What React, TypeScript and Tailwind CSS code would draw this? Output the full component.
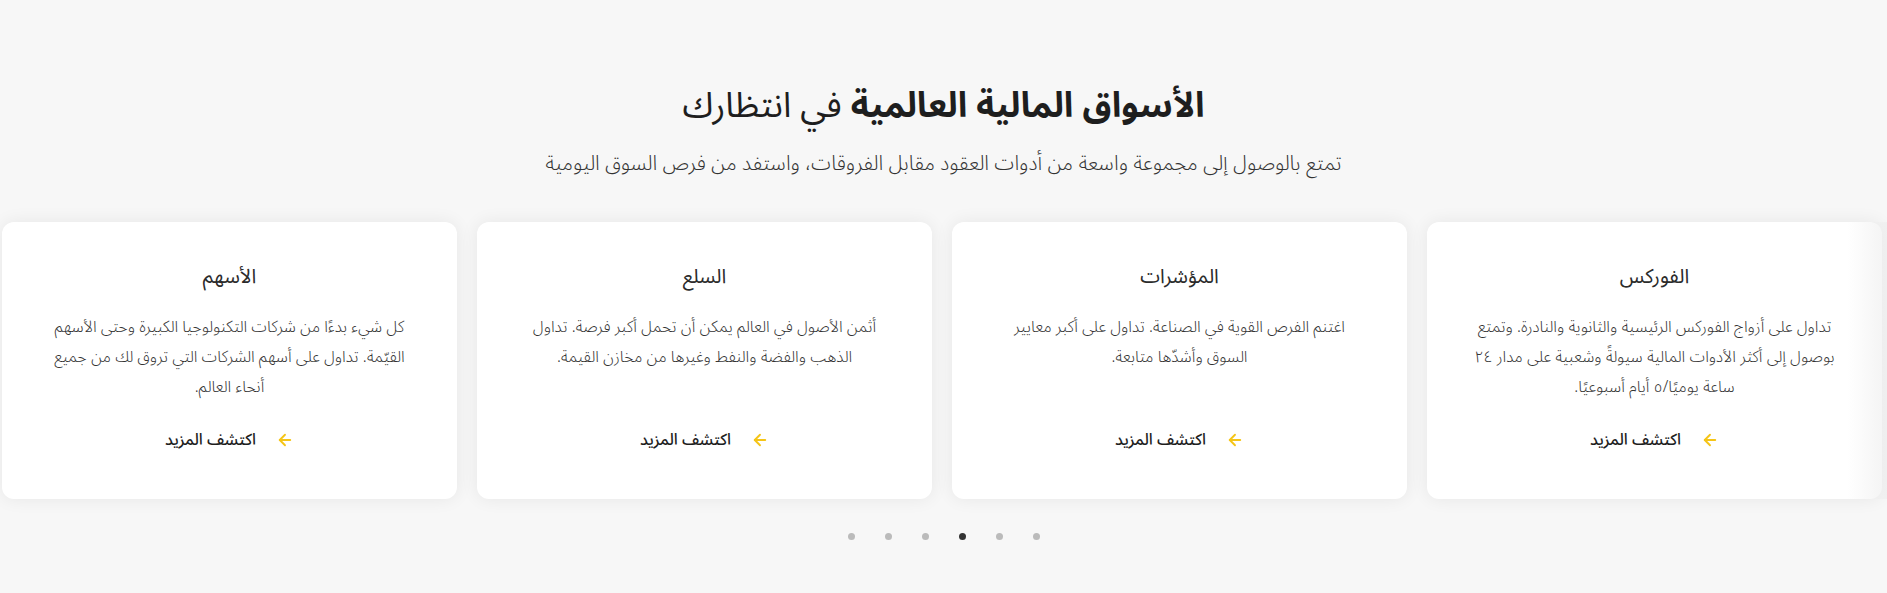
import React from "react";

const cards = [
  {
    title: "الفوركس",
    body: "تداول على أزواج الفوركس الرئيسية والثانوية والنادرة. وتمتع بوصول إلى أكثر الأدوات المالية سيولةً وشعبية على مدار ٢٤ ساعة يوميًا/٥ أيام أسبوعيًا.",
  },
  {
    title: "المؤشرات",
    body: "اغتنم الفرص القوية في الصناعة. تداول على أكبر معايير السوق وأشدّها متابعة.",
  },
  {
    title: "السلع",
    body: "أثمن الأصول في العالم يمكن أن تحمل أكبر فرصة. تداول الذهب والفضة والنفط وغيرها من مخازن القيمة.",
  },
  {
    title: "الأسهم",
    body: "كل شيء بدءًا من شركات التكنولوجيا الكبيرة وحتى الأسهم القيّمة. تداول على أسهم الشركات التي تروق لك من جميع أنحاء العالم.",
  },
];

function Arrow() {
  return (
    <svg width="18" height="18" viewBox="0 0 24 24" fill="none" stroke="#f5c518" strokeWidth="2.5" strokeLinecap="round" strokeLinejoin="round">
      <path d="M19 12H5" />
      <path d="M12 19l-7-7 7-7" />
    </svg>
  );
}

export default function App() {
  return (
    <div
      dir="rtl"
      className="relative min-h-[593px] w-full overflow-hidden bg-[#f7f7f7] pt-[81px]"
      style={{ fontFamily: '"Noto Sans Arabic", "Noto Naskh Arabic", "DejaVu Sans", sans-serif' }}
    >
      <h2 className="text-center text-[35px] leading-[50px] text-[#1e1e1e]">
        <span className="font-bold">الأسواق المالية العالمية</span> في انتظارك
      </h2>
      <p className="mt-[18px] text-center text-[20.5px] font-light leading-[30px] text-[#333]">
        تمتع بالوصول إلى مجموعة واسعة من أدوات العقود مقابل الفروقات، واستفد من فرص السوق اليومية
      </p>

      <div className="relative mt-[43px] flex gap-5 pl-[2px] pr-[5px]">
        {cards.map((c) => (
          <div
            key={c.title}
            className="flex h-[277px] w-[455px] shrink-0 flex-col items-center rounded-xl bg-white px-10 pb-[47px] pt-10 text-center shadow-[0_0_18px_rgba(0,0,0,0.07)]"
          >
            <h3 className="mb-5 text-[20px] leading-[30px] text-[#2b2b2b]">{c.title}</h3>
            <p className="text-[16px] font-light leading-[30px] text-[#333]">{c.body}</p>
            <a className="mt-auto flex items-center gap-5 text-[16px] font-medium leading-[24px] text-[#1e1e1e]">
              <Arrow />
              <span>اكتشف المزيد</span>
            </a>
          </div>
        ))}
        <div className="pointer-events-none absolute inset-y-0 right-0 w-[40px] bg-gradient-to-l from-[#eeeeee]/70 to-transparent" />
      </div>

      <div dir="ltr" className="mt-[34px] flex justify-center gap-[30px]">
        {[0, 1, 2, 3, 4, 5].map((i) => (
          <span key={i} className={"h-[7px] w-[7px] rounded-full " + (i === 3 ? "bg-[#333333]" : "bg-[#bbbbbb]")} />
        ))}
      </div>
    </div>
  );
}
